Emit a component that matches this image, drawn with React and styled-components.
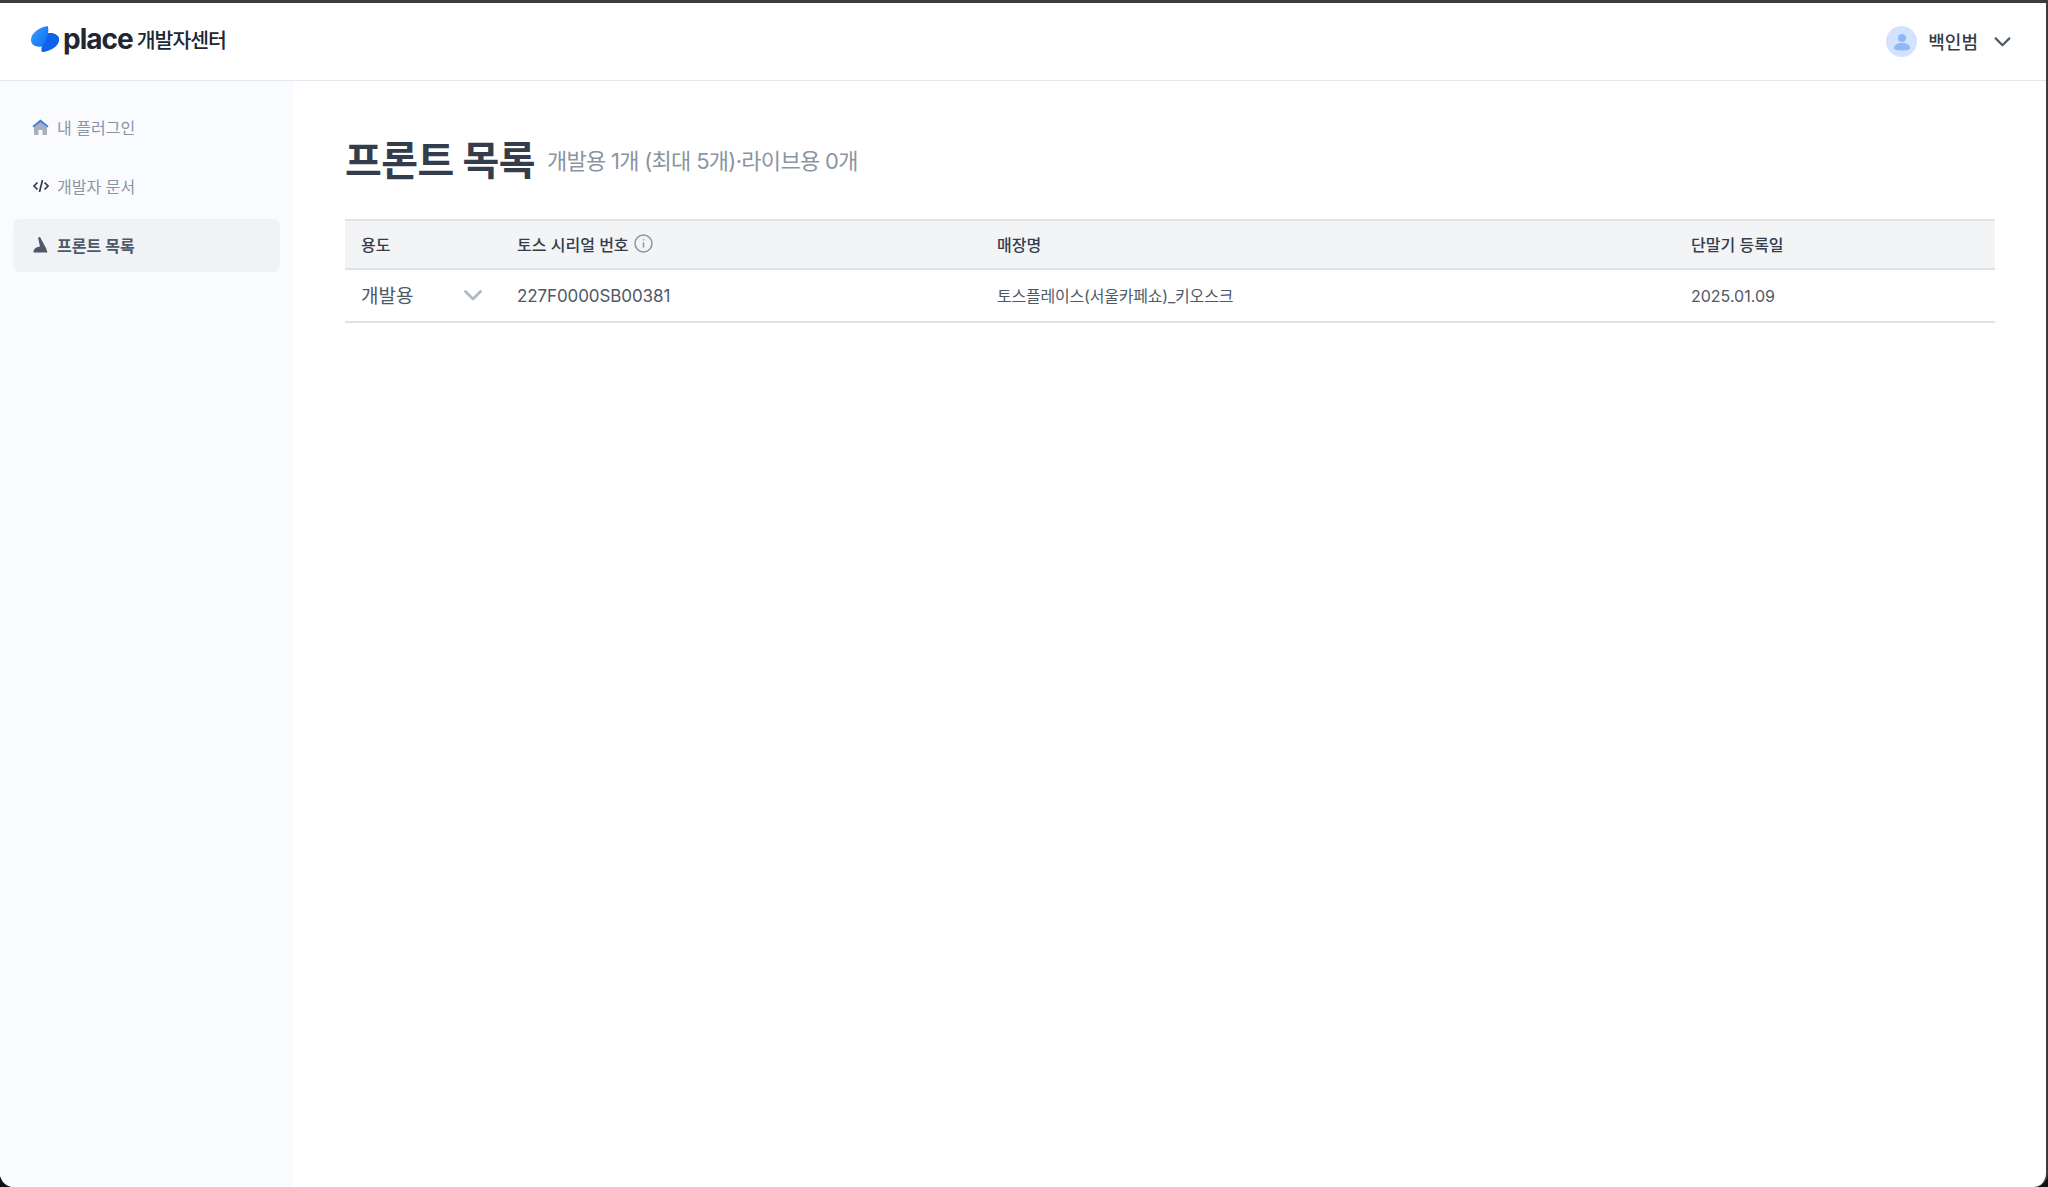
import React from 'react';
import styled, { createGlobalStyle } from 'styled-components';

const GlobalStyle = createGlobalStyle`
  html, body {
    margin: 0;
    padding: 0;
    height: 100%;
    background: #111;
  }
  #root {
    height: 100%;
  }
  * {
    box-sizing: border-box;
  }
`;

const Window = styled.div`
  width: 2048px;
  height: 1187px;
  border-top: 3px solid #3c3c3c;
  border-right: 2px solid #3c3c3c;
  border-radius: 0 0 14px 14px;
  overflow: hidden;
  background: #fff;
  display: flex;
  flex-direction: column;
  font-family: Inter, "Noto Sans CJK KR", sans-serif;
  color: #333d4b;
`;

const Header = styled.header`
  height: 78px;
  flex-shrink: 0;
  border-bottom: 1px solid #e5e8eb;
  display: flex;
  align-items: center;
  justify-content: space-between;
  padding: 0 35px 0 31px;
`;

const Brand = styled.div`
  display: flex;
  align-items: center;
  gap: 4px;
  padding-bottom: 5px;
`;

const Wordmark = styled.span`
  font-size: 28px;
  font-weight: 700;
  letter-spacing: -1px;
  color: #202632;
`;

const BrandLabel = styled.span`
  font-size: 20.5px;
  font-weight: 500;
  letter-spacing: -1px;
  color: #202632;
`;

const User = styled.div`
  display: flex;
  align-items: center;
  font-size: 18px;
  font-weight: 500;
  color: #333d4b;
`;

const UserName = styled.span`
  padding-bottom: 2px;
`;

const Avatar = styled.div`
  width: 31px;
  height: 31px;
  border-radius: 50%;
  background: #d3e3fd;
  display: flex;
  align-items: center;
  justify-content: center;
  margin-right: 11px;
`;

const UserChevron = styled.svg`
  width: 17px;
  height: 10px;
  margin-left: 16px;
  color: #4e5968;
`;

const Body = styled.div`
  flex: 1;
  display: flex;
  min-height: 0;
`;

const Sidebar = styled.nav`
  width: 293px;
  flex-shrink: 0;
  background: #f9fbfe;
  padding: 20px 13px 0;
  display: flex;
  flex-direction: column;
  gap: 6px;
`;

const NavItem = styled.div`
  height: 53px;
  border-radius: 8px;
  display: flex;
  align-items: center;
  gap: 8px;
  padding: 0 0 2px 19px;
  font-size: 16px;
  font-weight: ${p => (p.$active ? 600 : 400)};
  color: ${p => (p.$active ? '#4e5968' : '#8b95a1')};
  background: ${p => (p.$active ? '#f0f2f5' : 'transparent')};
`;

const NavIcon = styled.span`
  width: 17px;
  height: 17px;
  display: flex;
  align-items: center;
  justify-content: center;
`;

const Main = styled.main`
  flex: 1;
  padding: 52px 51px 0 52px;
`;

const TitleRow = styled.div`
  display: flex;
  align-items: center;
  gap: 12px;
  margin-bottom: 30px;
`;

const Title = styled.h1`
  margin: 0;
  font-size: 40px;
  line-height: 56px;
  font-weight: 700;
  letter-spacing: -0.6px;
  color: #333d4b;
`;

const Summary = styled.span`
  padding-bottom: 5px;
  font-size: 22px;
  font-weight: 400;
  color: #8b95a1;
  letter-spacing: -0.7px;
`;

const Table = styled.div`
  border-top: 2px solid #e0e2e5;
`;

const Row = styled.div`
  display: grid;
  grid-template-columns: 156px 480px 694px 1fr;
  align-items: center;
  height: ${p => (p.$head ? '49px' : '53px')};
  padding-bottom: ${p => (p.$head ? '2px' : '0')};
  background: ${p => (p.$head ? '#f2f4f6' : '#fff')};
  border-bottom: 2px solid #e0e2e5;
  font-size: 16px;
  font-weight: ${p => (p.$head ? 500 : 400)};
  color: ${p => (p.$head ? '#333d4b' : '#4e5968')};
`;

const Cell = styled.div`
  padding-left: 16px;
  display: flex;
  align-items: center;
  gap: 5px;
  white-space: nowrap;
`;

const SerialCell = styled(Cell)`
  font-size: 17px;
  letter-spacing: -0.1px;
`;

const StoreCell = styled(Cell)`
  padding-bottom: 2px;
  letter-spacing: -0.2px;
`;

const PurposeCell = styled(Cell)`
  justify-content: space-between;
  padding-right: 19px;
  font-size: 19px;
`;

const PurposeLabel = styled.span`
  padding-bottom: 2px;
`;

const RowChevron = styled.svg`
  width: 18px;
  height: 11px;
  color: #b0b8c1;
`;

const Chevron = ({ as: Icon, weight = 2.4 }) => (
  <Icon viewBox="0 0 18 11" fill="none">
    <path d="M1.5 1.5L9 9l7.5-7.5" stroke="currentColor" strokeWidth={weight} strokeLinecap="round" strokeLinejoin="round" />
  </Icon>
);

const App = () => (
  <>
    <GlobalStyle />
    <Window>
      <Header>
        <Brand>
          <svg width="28" height="26" viewBox="0 0 28 26">
            <defs>
              <linearGradient id="logoFill" x1="0" y1="0" x2="1" y2="0.6">
                <stop offset="0" stopColor="#35a2ff" />
                <stop offset="1" stopColor="#0a5cf0" />
              </linearGradient>
            </defs>
            <path d="M16.6 0C17.6 2.5 17.5 5 17 7C23 6.500 28 9 28 13.500C28 20 20 25 11 26C10.500 24 10.500 22 11 20.500C5 21.500 0 19 0 14C0 7 8 1.500 16.600 0Z" fill="url(#logoFill)" />
            <path d="M17 7C23 6.500 28 9 28 13.500C28 20 20 25 11 26C10.500 24 10.500 22 11 20.500C14 17.500 16.500 12 17 7Z" fill="#0f62ea" />
          </svg>
          <Wordmark>place</Wordmark>
          <BrandLabel>개발자센터</BrandLabel>
        </Brand>
        <User>
          <Avatar>
            <svg width="18" height="18" viewBox="0 0 18 18" fill="#8fb8fb">
              <circle cx="9" cy="5" r="4" />
              <path d="M1 15c0-3.500 4-5 8-5s8 1.500 8 5c0 1.800-3 2.500-8 2.500s-8-.7-8-2.500z" />
            </svg>
          </Avatar>
          <UserName>백인범</UserName>
          <Chevron as={UserChevron} />
        </User>
      </Header>
      <Body>
        <Sidebar>
          <NavItem>
            <NavIcon>
              <svg width="17" height="16" viewBox="0 0 17 16">
                <path d="M2 8v7a1 1 0 0 0 1 1h3.500v-5h4v5H14a1 1 0 0 0 1-1V8L8.500 3z" fill="#a7b0bc" />
                <path d="M.5 7L8.500 .5 16.500 7l-1 1.600L8.500 3.200 1.500 8.600z" fill="#3f7fdc" />
              </svg>
            </NavIcon>
            내 플러그인
          </NavItem>
          <NavItem>
            <NavIcon>
              <svg width="16" height="14" viewBox="0 0 16 14" fill="none" stroke="#333d4b" strokeWidth="1.700">
                <path d="M4.500 3.500L1 7l3.500 3.500M11.500 3.500L15 7l-3.500 3.500M9.500 1L6.500 13" />
              </svg>
            </NavIcon>
            개발자 문서
          </NavItem>
          <NavItem $active>
            <NavIcon>
              <svg width="15" height="16" viewBox="0 0 15 16">
                <path d="M5 .5L7 0l6 11 1.500 4.500H.5C.5 12 2.500 10 7 9.500z" fill="#4e5968" />
              </svg>
            </NavIcon>
            프론트 목록
          </NavItem>
        </Sidebar>
        <Main>
          <TitleRow>
            <Title>프론트 목록</Title>
            <Summary>개발용 1개 (최대 5개)·라이브용 0개</Summary>
          </TitleRow>
          <Table>
            <Row $head>
              <Cell>용도</Cell>
              <Cell>
                토스 시리얼 번호
                <svg width="19" height="19" viewBox="0 0 19 19" fill="none" stroke="#8b95a1" strokeWidth="1.500">
                  <circle cx="9.500" cy="9.500" r="8.500" />
                  <path d="M9.500 8.500v5M9.500 5.200v1.200" />
                </svg>
              </Cell>
              <Cell>매장명</Cell>
              <Cell>단말기 등록일</Cell>
            </Row>
            <Row>
              <PurposeCell>
                <PurposeLabel>개발용</PurposeLabel>
                <Chevron as={RowChevron} weight={2.8} />
              </PurposeCell>
              <SerialCell>227F0000SB00381</SerialCell>
              <StoreCell>토스플레이스(서울카페쇼)_키오스크</StoreCell>
              <Cell>2025.01.09</Cell>
            </Row>
          </Table>
        </Main>
      </Body>
    </Window>
  </>
);

export default App;
